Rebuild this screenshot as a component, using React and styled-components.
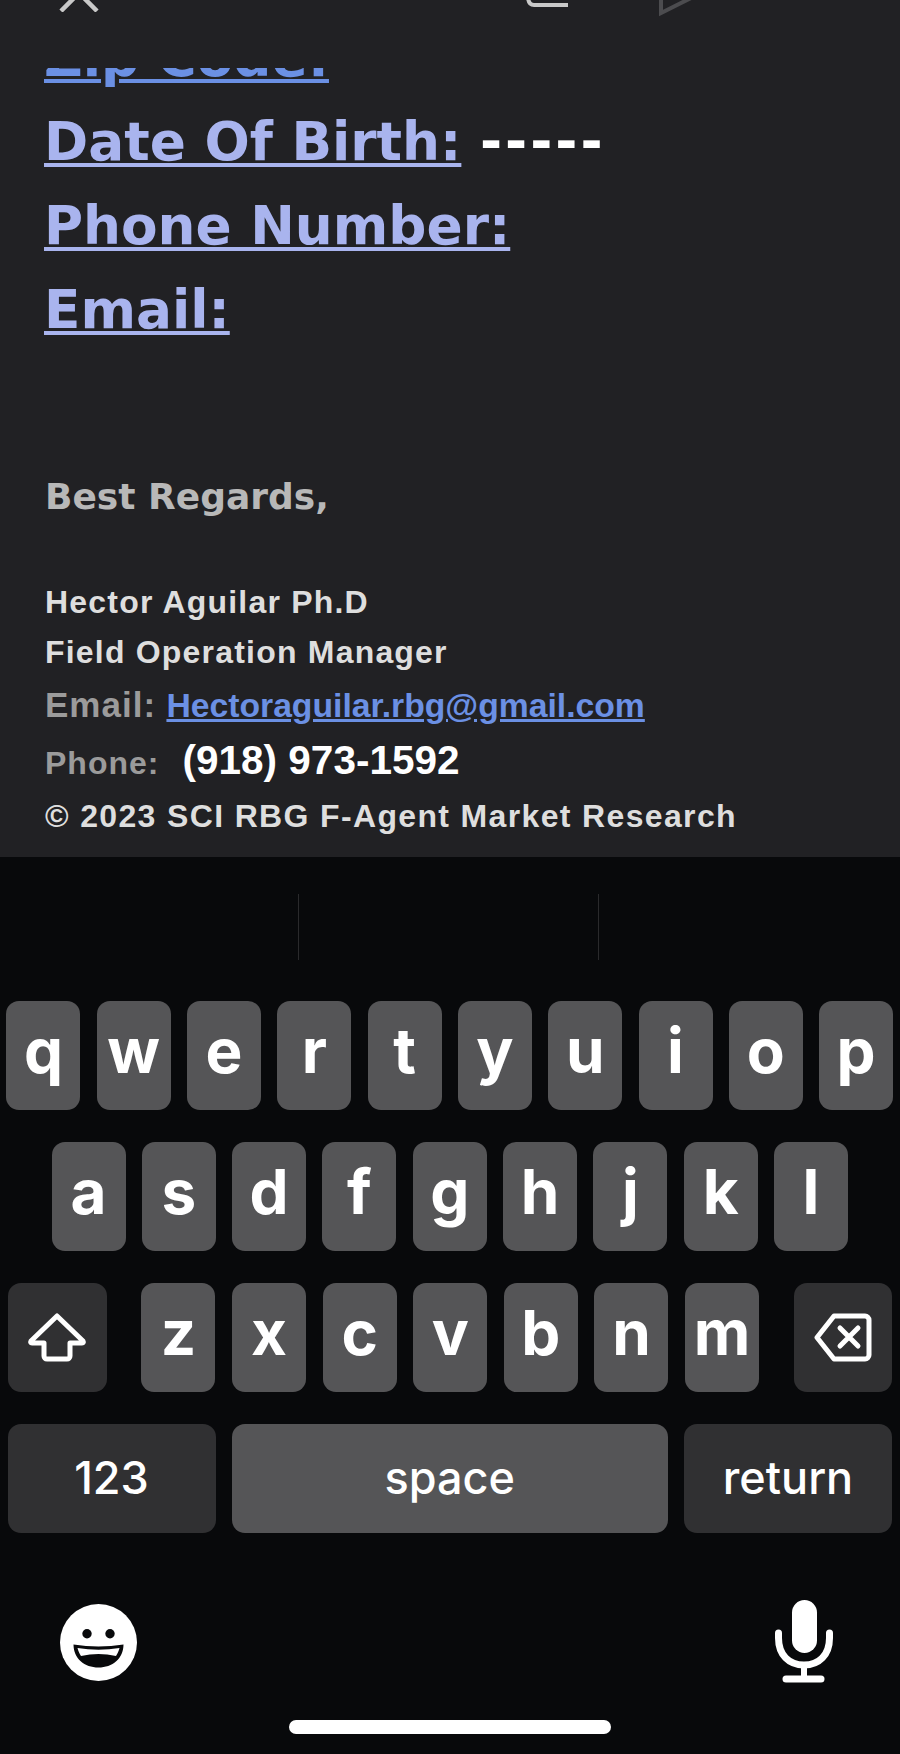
import React from 'react';
import styled, {createGlobalStyle} from 'styled-components';

const GlobalStyle = createGlobalStyle`
    html, body {
        margin: 0;
        padding: 0;
        background: #08090b;
    }
`

const Screen = styled.div`
    width: 900px;
    height: 1754px;
    overflow: hidden;
    display: flex;
    flex-direction: column;
`

const MailPane = styled.div`
    height: 857px;
    background: #212124;
    display: flex;
    flex-direction: column;
`

const Header = styled.div`
    height: 68px;
    flex-shrink: 0;
    display: flex;
    align-items: flex-start;
    padding-left: 58px;
`

const HeaderIcon = styled.svg`
    display: block;
    margin-left: ${props => props.$gap || 0}px;
`

const MailBody = styled.div`
    flex: 1;
    overflow: hidden;
    padding-left: 44px;
`

const Scrolled = styled.div`
    margin-top: -52px;
`

const Field = styled.div`
    font-family: "DejaVu Sans", sans-serif;
    font-weight: 700;
    font-size: 53.3px;
    line-height: 84px;
    white-space: nowrap;
`

const FieldLabel = styled.span`
    color: ${props => props.$color || '#a9b4ee'};
    text-decoration: underline;
    text-decoration-thickness: 4px;
    text-underline-offset: 3px;
`

const Dashes = styled.span`
    color: #ffffff;
    letter-spacing: 3px;
`

const Regards = styled.div`
    margin-top: 123px;
    font-family: "DejaVu Sans", sans-serif;
    font-weight: 700;
    font-size: 36px;
    line-height: 44px;
    color: #b8b8b8;
    margin-left: 1px;
`

const Signature = styled.div`
    margin-top: 58px;
    margin-left: 1px;
    font-family: "Liberation Sans", Arial, sans-serif;
    font-weight: 700;
    color: #dedede;
`

const SignLine = styled.div`
    font-size: ${props => props.$size || 32}px;
    line-height: ${props => props.$height || 50}px;
    letter-spacing: ${props => props.$spacing ?? 1.2}px;
    white-space: nowrap;
`

const Muted = styled.span`
    color: #9b9b9b;
    font-size: ${props => props.$size || 32}px;
    letter-spacing: 1px;
`

const MailLink = styled.span`
    color: #6b90e4;
    text-decoration: underline;
    letter-spacing: 0;
    margin-left: 1px;
`

const PhoneNumber = styled.span`
    color: #ffffff;
    font-size: 40.5px;
    letter-spacing: 0;
    margin-left: 13px;
`

const Keyboard = styled.div`
    flex: 1;
    background: #08090b;
    display: flex;
    flex-direction: column;
`

const Suggestions = styled.div`
    height: 144px;
    flex-shrink: 0;
    box-sizing: border-box;
    padding-top: 37px;
    padding-bottom: 41px;
    display: grid;
    grid-template-columns: 299px 300px 1fr;
`

const Suggestion = styled.div`
    border-right: ${props => props.$last ? 'none' : '1px solid #2a2a2c'};
`

const Keys = styled.div`
    display: flex;
    flex-direction: column;
    gap: 32px;
    padding: 0 8px 0 7.5px;
`

const KeyRow = styled.div`
    display: flex;
    justify-content: ${props => props.$spread ? 'space-between' : 'center'};
    gap: 16.3px;
`

const LetterGroup = styled.div`
    display: flex;
    gap: 16.6px;
`

const Key = styled.div`
    width: ${props => props.$width || 74}px;
    flex: ${props => props.$grow ? 1 : 'none'};
    height: 109px;
    border-radius: 13px;
    background: ${props => props.$dark ? '#303032' : '#555557'};
    color: #ffffff;
    display: flex;
    align-items: center;
    justify-content: center;
    font-family: Inter, "Liberation Sans", sans-serif;
    font-weight: 700;
    font-size: 62px;
    line-height: 1;
    padding-bottom: ${props => props.$icon ? 0 : 10}px;
    box-sizing: border-box;
`

const WordKey = styled(Key)`
    font-weight: 500;
    font-size: 45px;
    padding-bottom: 3px;
`

const BottomRow = styled.div`
    margin-top: 67px;
    height: 84px;
    display: flex;
    align-items: center;
    justify-content: space-between;
    padding: 0 67px 0 60px;
`

const HomeBar = styled.div`
    width: 322px;
    height: 14px;
    border-radius: 7px;
    background: #ffffff;
    margin: 36px auto 0;
`

const rows = ['qwertyuiop'.split(''), 'asdfghjkl'.split(''), 'zxcvbnm'.split('')]

const ShiftIcon = () => (
    <svg width="58" height="49" viewBox="0 0 58 49" fill="none" stroke="#fff" strokeWidth="5" strokeLinejoin="round">
        <path d="M29 3 L55 28 Q56 30 54 30 H42 V43 a3 3 0 0 1 -3 3 H19 a3 3 0 0 1 -3 -3 V30 H4 Q2 30 3 28 Z"/>
    </svg>
)

const BackspaceIcon = () => (
    <svg width="58" height="49" viewBox="0 0 58 49" fill="none" stroke="#fff" strokeWidth="5" strokeLinejoin="round" strokeLinecap="round">
        <path d="M20 3 H51 a4 4 0 0 1 4 4 V42 a4 4 0 0 1 -4 4 H20 L3 24.5 Z"/>
        <path d="M26 15 L44 33 M44 15 L26 33"/>
    </svg>
)

const EmojiIcon = () => (
    <svg width="77" height="77" viewBox="-38.5 -38.5 77 77">
        <circle r="38.5" fill="#fff"/>
        <circle cx="-11.5" cy="-8.7" r="4.7" fill="#08090b"/>
        <circle cx="11.5" cy="-8.7" r="4.7" fill="#08090b"/>
        <path d="M-25 2 Q0 6 25 2 C25 16 14 25 0 25 C-14 25 -25 16 -25 2 Z" fill="#08090b"/>
        <path d="M-21 5.5 Q0 9 21 5.5 C20 9 19 11 17.5 13.5 Q0 9.5 -17.5 13.5 C-19 11 -20 9 -21 5.5 Z" fill="#fff"/>
    </svg>
)

const MicIcon = () => (
    <svg width="58" height="84" viewBox="0 0 58 84" fill="none" stroke="#fff" strokeWidth="7" strokeLinecap="round">
        <rect x="17" y="0" width="25" height="53" rx="12.5" fill="#fff" stroke="none"/>
        <path d="M3.5 33 V38 C3.5 55 14 65 29 65 C44 65 54.5 55 54.5 38 V33"/>
        <path d="M29 66 V78" strokeLinecap="butt" strokeWidth="6"/>
        <path d="M11 79 H46"/>
    </svg>
)

const App = () => {
    return (
        <Screen>
            <GlobalStyle/>
            <MailPane>
                <Header>
                    <HeaderIcon width="42" height="12" viewBox="0 0 42 12" fill="none" stroke="#c9c9c9" strokeWidth="4.5">
                        <path d="M3 11 L17 -3 M39 11 L25 -3"/>
                    </HeaderIcon>
                    <HeaderIcon $gap={426} width="42" height="9" viewBox="0 0 42 9" fill="none" stroke="#c9c9c9" strokeWidth="4">
                        <path d="M2 -4 Q2 5 8 5 H42"/>
                    </HeaderIcon>
                    <HeaderIcon $gap={91} width="38" height="17" viewBox="0 0 38 17" fill="none" stroke="#4c4c4f" strokeWidth="4">
                        <path d="M2 -2 V13 L36 -4"/>
                    </HeaderIcon>
                </Header>
                <MailBody>
                    <Scrolled>
                        <Field><FieldLabel $color="#6b90e4">Zip Code:</FieldLabel></Field>
                        <Field><FieldLabel>Date Of Birth:</FieldLabel> <Dashes>-----</Dashes></Field>
                        <Field><FieldLabel>Phone Number:</FieldLabel></Field>
                        <Field><FieldLabel>Email:</FieldLabel></Field>
                        <Regards>Best Regards,</Regards>
                        <Signature>
                            <SignLine>Hector Aguilar Ph.D</SignLine>
                            <SignLine>Field Operation Manager</SignLine>
                            <SignLine $size={33.7} $height={56} $spacing={0}><Muted $size={35}>Email:</Muted> <MailLink>Hectoraguilar.rbg@gmail.com</MailLink></SignLine>
                            <SignLine $height={55}><Muted>Phone:</Muted> <PhoneNumber>(918) 973-1592</PhoneNumber></SignLine>
                            <SignLine $spacing={1.35}>© 2023 SCI RBG F-Agent Market Research</SignLine>
                        </Signature>
                    </Scrolled>
                </MailBody>
            </MailPane>
            <Keyboard>
                <Suggestions>
                    <Suggestion/>
                    <Suggestion/>
                    <Suggestion $last/>
                </Suggestions>
                <Keys>
                    <KeyRow>
                        {rows[0].map(letter => <Key key={letter}>{letter}</Key>)}
                    </KeyRow>
                    <KeyRow>
                        {rows[1].map(letter => <Key key={letter}>{letter}</Key>)}
                    </KeyRow>
                    <KeyRow $spread>
                        <Key $dark $icon $width={99}><ShiftIcon/></Key>
                        <LetterGroup>
                            {rows[2].map(letter => <Key key={letter}>{letter}</Key>)}
                        </LetterGroup>
                        <Key $dark $icon $width={98}><BackspaceIcon/></Key>
                    </KeyRow>
                    <KeyRow>
                        <WordKey $dark $width={208}>123</WordKey>
                        <WordKey $grow>space</WordKey>
                        <WordKey $dark $width={208}>return</WordKey>
                    </KeyRow>
                </Keys>
                <BottomRow>
                    <EmojiIcon/>
                    <MicIcon/>
                </BottomRow>
                <HomeBar/>
            </Keyboard>
        </Screen>
    )
}

export default App;
